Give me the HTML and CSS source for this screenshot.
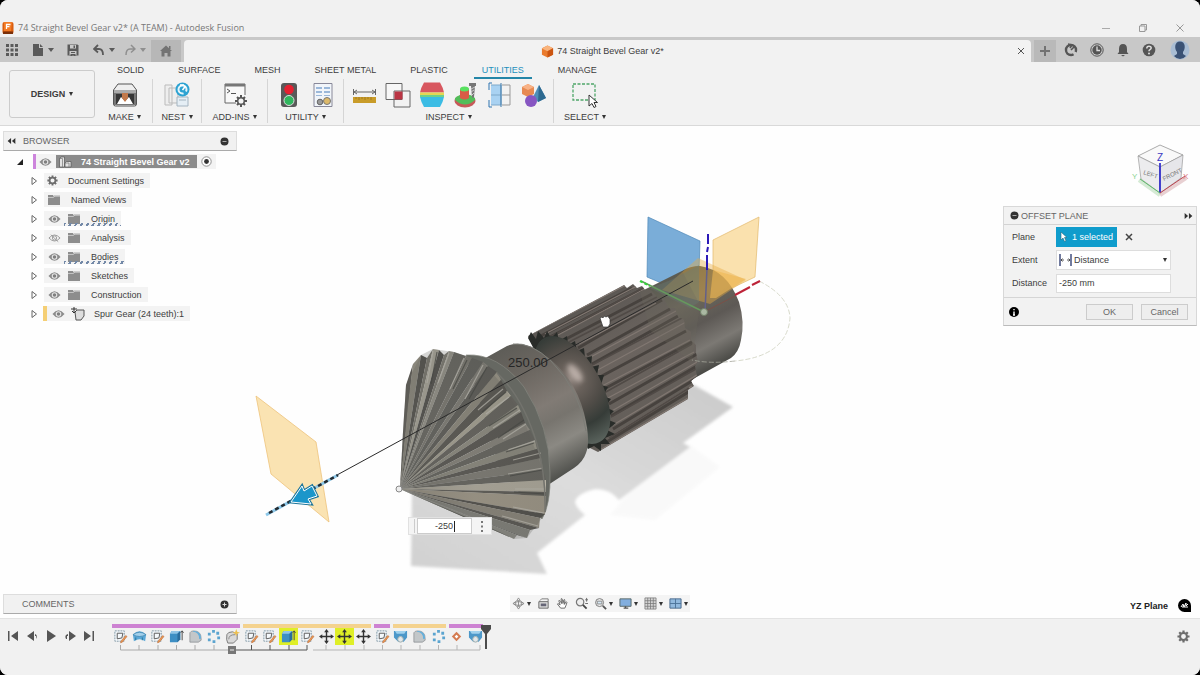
FILE: index.html
```html
<!DOCTYPE html>
<html lang="en">
<head>
<meta charset="utf-8">
<title>74 Straight Bevel Gear v2* (A TEAM) - Autodesk Fusion</title>
<link rel="stylesheet" href="styles.css">
</head>
<body>
<svg class="defs" width="0" height="0" aria-hidden="true">
  <symbol id="eye" viewBox="0 0 14 10"><path d="M.5 5Q7-3 13.500 5Q7 13 .5 5Z" fill="#8b8b8b"/><circle cx="7" cy="5" r="3" fill="#e8e8e8"/><circle cx="7" cy="5" r="1.900" fill="#808080"/></symbol>
  <symbol id="eye-off" viewBox="0 0 14 10"><path d="M1 5Q7-1.500 13 5Q7 11.500 1 5Z" fill="none" stroke="#999"/><circle cx="7" cy="5" r="2.300" fill="none" stroke="#999"/><path d="M3 1.500L11 9" stroke="#999"/></symbol>
  <symbol id="folder" viewBox="0 0 14 12"><path d="M1 1h5l1 2h6v8H1Z" fill="#8d8d8d"/><path d="M7 3V1.500h6V3" fill="#a5a5a5"/><path d="M1 3.500h5.500L8 2h5" stroke="#d0d0d0" fill="none" stroke-width=".8"/></symbol>
  <symbol id="gear" viewBox="0 0 14 14"><path d="M7 0.500V13.500M.5 7H13.500M2.400 2.400L11.600 11.600M11.600 2.400L2.400 11.600" stroke="#6d6d6d" stroke-width="2.400"/><circle cx="7" cy="7" r="3.700" fill="#f3f3f3" stroke="#6d6d6d" stroke-width="2.200"/></symbol>
  <symbol id="closed" viewBox="0 0 8 10"><path d="M2 1.500L6.500 5L2 8.500Z" fill="#fff" stroke="#666"/></symbol>
  <symbol id="sketch" viewBox="0 0 16 16"><path d="M2 2h10v11H2Z" fill="#f5f9fc" stroke="#7c93a3" stroke-dasharray="2 1"/><path d="M4.500 4.500h6l-1 5-5 1Z" fill="none" stroke="#555"/><path d="M13.500 7l1.500 1-5 6-2 .8.5-2Z" fill="#e79755" stroke="#b96532" stroke-width=".5"/></symbol>
  <symbol id="extrude" viewBox="0 0 16 16"><path d="M1 5l2-3h9v9l-3 3H1Z" fill="#3e8fc4"/><path d="M1 5l2-3h9L9 5Z" fill="#90c4e6"/><path d="M9 5l3-3v9l-3 3Z" fill="#2b6d9d"/><path d="M14 12V2M12.500 4L14 2l1.500 2" stroke="#444" fill="none"/></symbol>
  <symbol id="revolve" viewBox="0 0 16 16"><path d="M1 6Q8-1 15 6L14 13Q8 9 2 13Z" fill="#5ba8d7"/><path d="M1 6Q8 1 15 6Q8 10 1 6" fill="#a3d0eb" stroke="#367da8" stroke-width=".7"/><path d="M4 9v3M11 9v3" stroke="#287399"/></symbol>
  <symbol id="fillet" viewBox="0 0 16 16"><path d="M2 4q1-2 4-2 8 0 8 8v2l-3 2H2Z" fill="#c3c7c9" stroke="#808488" stroke-width=".7"/><path d="M5 3q7 0 7 8l2-1Q14 2 6 2Z" fill="#64b0dd"/></symbol>
  <symbol id="pattern" viewBox="0 0 16 16"><g fill="#5ba4cf"><path d="M6.500 1h3v3h-3zM11 3h3v3h-3zM12 8h3v3h-3zM7 12h3v3H7zM2 10h3v3H2zM2 4h3v3H2z"/></g></symbol>
  <symbol id="form" viewBox="0 0 16 16"><path d="M2 6q1-3 6-3l5 2v6l-4 4H3Q1 12 2 6Z" fill="#d9d9d9" stroke="#777"/><path d="M4 11q0-5 7-5" fill="none" stroke="#888"/><path d="M12 0l1 3 3 1-3 1-1 3-1-3-3-1 3-1Z" fill="#edc04f"/></symbol>
  <symbol id="move" viewBox="0 0 16 16"><path d="M8 2v12M2 8h12" stroke="#333" stroke-width="1.500"/><path d="M8 0l2.500 3.500h-5ZM8 16l2.500-3.500h-5ZM0 8l3.500-2.500v5ZM16 8l-3.500-2.500v5Z" fill="#333"/></symbol>
  <symbol id="cut" viewBox="0 0 16 16"><path d="M1 2h14v7l-4 5-1-5Q8 6 6 9v5L1 9Z" fill="#4d98c9"/><path d="M2 2h12l-2 3H4Z" fill="#a0d1ed"/><circle cx="8" cy="11" r="3" fill="#e3e8eb" stroke="#9aa"/></symbol>
  <symbol id="diamond" viewBox="0 0 16 16"><path d="M8 3l5 5-5 5-5-5Z" fill="#d47b51"/><path d="M8 6l2 2-2 2-2-2Z" fill="#fff"/></symbol>
  <symbol id="hex" viewBox="0 0 14 14"><path d="M7 .5l6 3v7l-6 3-6-3v-7Z" fill="#ea7b2d"/><path d="M7 .5l6 3-6 3.300-6-3Z" fill="#f9b47d"/><path d="M7 6.800l6-3.300v7l-6 3Z" fill="#cb5511"/></symbol>
</svg>

<div class="app">
  <header class="titlebar">
    <svg class="logo" viewBox="0 0 12 14"><rect x=".5" y="1" width="11" height="12" rx="2" fill="#d95d0f"/><path d="M2 1h8l-1 9H2Z" fill="#f37b25"/><path d="M4.500 8V3.500h4M4.500 5.700h3" stroke="#fff" stroke-width="1.300" fill="none"/><path d="M1 10.500h10V13H1Z" fill="#7a2f08"/></svg>
    <span class="title">74 Straight Bevel Gear v2* (A TEAM) - Autodesk Fusion</span>
    <div class="window-buttons">
      <button aria-label="Minimize"><svg viewBox="0 0 10 10"><path d="M1 5.500h8" stroke="#aaa"/></svg></button>
      <button aria-label="Restore"><svg viewBox="0 0 10 10"><path d="M1.500 3h5.500v5.500h-5.500zM3 3V1.500h5.500V7H7" fill="none" stroke="#999"/></svg></button>
      <button aria-label="Close"><svg viewBox="0 0 10 10"><path d="M1.500 1.500l7 7M8.500 1.500l-7 7" stroke="#999"/></svg></button>
    </div>
  </header>

  <nav class="tabbar">
    <div class="quick">
      <button class="q-grid" aria-label="Data panel"><svg width="12" height="12" viewBox="0 0 12 12"><path d="M0 0h3v3H0zM4.500 0h3v3h-3zM9 0h3v3H9zM0 4.500h3v3H0zM4.500 4.500h3v3h-3zM9 4.500h3v3H9zM0 9h3v3H0zM4.500 9h3v3h-3zM9 9h3v3H9z" fill="#5a5a5a"/></svg></button>
      <button class="q-file" aria-label="File"><svg width="12" height="14" viewBox="0 0 12 14"><path d="M1 1h6v4h4v8H1Z" fill="#5a5a5a"/><path d="M8 1l3 3H8Z" fill="#5a5a5a"/></svg><i class="caret big"></i></button>
      <button class="q-save" aria-label="Save"><svg width="12" height="12" viewBox="0 0 12 12"><path d="M.5.5h10l1 1v10H.5Z" fill="#5a5a5a"/><path d="M3 1h6v3.500H3zM2.500 7h7v4h-7z" fill="#c9c9c9"/><path d="M6.500 1.500H8V4H6.500zM4 8h4v1H4zM3.500 10h5v2h-2v-1h-1v1h-2z" fill="#5a5a5a"/></svg></button>
      <button class="q-undo" aria-label="Undo"><svg width="12" height="12" viewBox="0 0 12 12"><path d="M5 1L1 5l4 3.500M1.500 5H6q4 0 4 6" fill="none" stroke="#5a5a5a" stroke-width="1.800"/></svg><i class="caret big"></i></button>
      <button class="q-redo" aria-label="Redo"><svg width="12" height="12" viewBox="0 0 12 12"><path d="M7 1l4 4-4 3.500M10.500 5H6q-4 0-4 6" fill="none" stroke="#8f8f8f" stroke-width="1.500"/></svg><i class="caret big dim"></i></button>
      <button class="home" aria-label="Home"><svg width="12" height="12" viewBox="0 0 12 12"><path d="M6 .5L12 6h-1.500v5.500h-3V8h-3v3.500h-3V6H0ZM9 1h1.500v3H9Z" fill="#737373"/></svg></button>
    </div>
    <div class="doc-tab">
      <span class="doc-name"><svg width="13" height="13"><use href="#hex"/></svg>74 Straight Bevel Gear v2*</span>
      <button class="doc-close" aria-label="Close tab"><svg width="8" height="8" viewBox="0 0 8 8"><path d="M1 1l6 6M7 1L1 7" stroke="#555"/></svg></button>
    </div>
    <div class="account">
      <button class="plus" aria-label="New tab"><svg width="12" height="12" viewBox="0 0 12 12"><path d="M6 1v10M1 6h10" stroke="#727272" stroke-width="2"/></svg></button>
      <button aria-label="Extensions"><svg width="14" height="14" viewBox="0 0 14 14"><circle cx="7" cy="7" r="5" fill="none" stroke="#555" stroke-width="2.400" stroke-dasharray="2 3 40"/><path d="M7 7l3-3M4 1l4 1-2 3" stroke="#555" fill="none" stroke-width="1.600"/></svg></button>
      <button aria-label="Job status"><svg width="14" height="14" viewBox="0 0 14 14"><circle cx="7" cy="7" r="6.200" fill="#ccc" stroke="#555"/><circle cx="7" cy="7" r="4.700" fill="#555"/><path d="M7 3.500V7.500h3" stroke="#ddd" fill="none" stroke-width="1.300"/></svg></button>
      <button aria-label="Notifications"><svg width="14" height="14" viewBox="0 0 14 14"><path d="M7 1q4 0 4 5v3l1.500 2h-11L3 9V6q0-5 4-5ZM5 12h4l-2 1.500Z" fill="#555"/></svg></button>
      <button aria-label="Help"><svg width="14" height="14" viewBox="0 0 14 14"><circle cx="7" cy="7" r="6.300" fill="#555"/><path d="M4.800 5.500q0-2.200 2.200-2.200t2.200 1.800q0 1-1.500 1.800-.7.500-.7 1.300" stroke="#ddd" fill="none" stroke-width="1.500"/><circle cx="7" cy="10.500" r="1" fill="#ddd"/></svg></button>
      <button aria-label="Account"><svg width="20" height="20" viewBox="0 0 20 20"><circle cx="10" cy="10" r="9.500" fill="#a9bdd4"/><path d="M10 1.500c6 0 5.500 8 3 10.500v2l3 2q-2.500 3-6 3t-6-3l3-2v-2C4.500 9.500 4 1.500 10 1.500Z" fill="#3b5275"/></svg></button>
    </div>
  </nav>

  <section class="ribbon">
    <button class="design">DESIGN <i class="caret"></i></button>
    <div class="ribbon-main">
      <div class="ribbon-tabs" role="tablist">
        <button role="tab">SOLID</button><button role="tab">SURFACE</button><button role="tab">MESH</button><button role="tab">SHEET METAL</button><button role="tab">PLASTIC</button><button role="tab" class="active" aria-selected="true">UTILITIES</button><button role="tab">MANAGE</button>
      </div>
      <div class="groups">
        <div class="group g-make"><div class="tools"><button aria-label="3D Print"><svg viewBox="0 0 26 26"><path d="M1.500 8L6 2h14l4.500 6v14q0 2-2 2h-19q-2 0-2-2Z" fill="#eee" stroke="#555"/><path d="M2 8h22v15H2Z" fill="#777"/><path d="M2 8h22v3H2Z" fill="#aaa"/><path d="M4 12h18v10H4Z" fill="#363636"/><path d="M5 22l4-7 4 4 4-4 4 7Z" fill="#fff"/><path d="M10 11h6v5l-3 4-3-4Z" fill="#c2794b"/></svg></button></div><button class="label">MAKE <i class="caret"></i></button></div>
        <div class="group g-nest"><div class="tools"><button aria-label="Nest"><svg viewBox="0 0 26 26"><path d="M1 3h7v20H1zM5 6h9v15H5z" fill="#eee" stroke="#bbb"/><path d="M13 15h11v9H13zM15 18h7" fill="#e5eef5" stroke="#a4b4c0"/><circle cx="18.500" cy="7.500" r="7" fill="#2ba2d2"/><circle cx="18.500" cy="7.500" r="4" fill="none" stroke="#e5f5fb" stroke-width="2" stroke-dasharray="2 3 30"/><path d="M18.500 8l3-4M16 3l4 0" stroke="#fff" stroke-width="1.500"/></svg></button></div><button class="label">NEST <i class="caret"></i></button></div>
        <div class="group g-addins"><div class="tools"><button aria-label="Scripts and Add-Ins"><svg viewBox="0 0 26 26"><path d="M14 21H3V2h20v11" fill="#f8f8f8" stroke="#666"/><path d="M3 2h20v2.500H3Z" fill="#777"/><path d="M5 7l3 2-3 2M9 11.500h5" fill="none" stroke="#555"/><path d="M19 13v12M13 19h12M15 15l8 8M23 15l-8 8" stroke="#555" stroke-width="2"/><circle cx="19" cy="19" r="3.300" fill="#f4f4f4" stroke="#555" stroke-width="1.500"/></svg></button></div><button class="label">ADD-INS <i class="caret"></i></button></div>
        <div class="group g-utility"><div class="tools"><button aria-label="Compute"><svg viewBox="0 0 26 26"><rect x="5" y="1" width="16" height="24" rx="3" fill="#595959"/><circle cx="13" cy="7.500" r="4.800" fill="#e62031"/><circle cx="13" cy="18.500" r="5" fill="#31b65e" stroke="#ddd"/></svg></button><button aria-label="Utility report"><svg viewBox="0 0 26 26"><path d="M4 1.500h18v23H4Z" fill="#f1f5fa" stroke="#889"/><path d="M6 5h6v2H6zM14 5h6v2h-6zM6 9h6v2H6zM14 9h6v2h-6zM6 13h6v1H6zM14 13h6v1h-6z" fill="#9bb8da"/><circle cx="10" cy="20" r="2.800" fill="#999" stroke="#666"/><circle cx="17" cy="19" r="3.500" fill="#ddb969" stroke="#777"/></svg></button></div><button class="label">UTILITY <i class="caret"></i></button></div>
        <div class="group g-inspect"><div class="tools">
          <button aria-label="Measure"><svg viewBox="0 0 26 26"><path d="M2 15h23v6H2Z" fill="#c99c29"/><path d="M5 15v2M8 15v3M11 15v2M14 15v3M17 15v2M20 15v3" stroke="#a27b20"/><path d="M2.500 7v6M24.500 7v6M3 10h21M6 8l-3 2 3 2M21 8l3 2-3 2" fill="none" stroke="#666"/></svg></button>
          <button aria-label="Interference"><svg viewBox="0 0 26 26"><path d="M1 1.500h16v16H1z" fill="#f7f7f7" stroke="#666"/><path d="M9 9h16v16H9z" fill="none" stroke="#666"/><path d="M9.500 9.500h8v8h-8Z" fill="#ba3544"/></svg></button>
          <button aria-label="Curvature"><svg viewBox="0 0 26 26"><path d="M5 .5h16q3 5 4 10H1Q2 5.500 5 .5Z" fill="#d8575f"/><path d="M1 10.500h24v2.500H1Z" fill="#e5d753"/><path d="M1 13h24v2H1Z" fill="#6fd188"/><path d="M1 15h24q-1 5-4 10H5Q2 20 1 15Z" fill="#3bbce4"/></svg></button>
          <button aria-label="Accessibility"><svg viewBox="0 0 26 26"><ellipse cx="12" cy="19" rx="10.500" ry="6.500" fill="#c75959"/><path d="M2 16q10-8 20 0v2Q12 27 2 18Z" fill="#52bd59"/><path d="M7 7h9v9q-4.500 3-9 0Z" fill="#d95b46"/><ellipse cx="11.500" cy="7" rx="4.500" ry="2.500" fill="#58e160"/><path d="M16 1h7v3h-1l-1 11q-1 2-2 0L18 4h-2Z" fill="#777"/><path d="M18 7l4-2M18 10l3-2M19 13l2-2" stroke="#ccc"/></svg></button>
          <button aria-label="Section analysis"><svg viewBox="0 0 26 26"><path d="M4 3h10v20H4Z" fill="#a9d2f2"/><path d="M4 3h10v20H4M4 13h10" fill="none" stroke="#7fa9ca"/><path d="M15 3h8v20h-8M15 13h8" fill="none" stroke="#999"/><path d="M14 1v24" stroke="#3c79aa"/><path d="M2 8V1h3M2 18v7h3" fill="none" stroke="#2e75b1"/></svg></button>
          <button aria-label="Component colors"><svg viewBox="0 0 26 26"><path d="M7 2l6 3v7l-6 3-6-3V5Z" fill="#e78a52"/><path d="M7 2l6 3-6 3-6-3Z" fill="#f8b286"/><path d="M18 3l7 13-8 4-5-5Z" fill="#4e8fb9"/><path d="M18 3l7 13-8 4Z" fill="#2d6990"/><circle cx="10" cy="19" r="6" fill="#8756c2"/></svg></button>
        </div><button class="label">INSPECT <i class="caret"></i></button></div>
        <div class="group g-select"><div class="tools"><button aria-label="Select"><svg viewBox="0 0 26 26"><path d="M1 2h22v16H1Z" fill="none" stroke="#4fa669" stroke-width="1.300" stroke-dasharray="3 1.500"/><path d="M17 13v11l3-2.500 2 4 2-1-2-4h3.500Z" fill="#fff" stroke="#333"/></svg></button></div><button class="label">SELECT <i class="caret"></i></button></div>
      </div>
    </div>
  </section>

  <main class="stage">
    <svg class="scene" viewBox="0 126 1200 492" role="img" aria-label="Bevel gear model">
      <defs>
        <linearGradient id="collar" gradientUnits="userSpaceOnUse" x1="500" y1="347" x2="569" y2="474"><stop offset="0" stop-color="#5d5c57"/><stop offset=".25" stop-color="#6c6761"/><stop offset=".5" stop-color="#817b75"/><stop offset=".62" stop-color="#77746e"/><stop offset=".78" stop-color="#8b8983"/><stop offset="1" stop-color="#4d4e4a"/></linearGradient>
        <linearGradient id="shaft" gradientUnits="userSpaceOnUse" x1="670" y1="276" x2="718" y2="366"><stop offset="0" stop-color="#55564d"/><stop offset=".3" stop-color="#6b675b"/><stop offset=".55" stop-color="#5d5955"/><stop offset=".78" stop-color="#7c7974"/><stop offset="1" stop-color="#484844"/></linearGradient>
        <linearGradient id="spur" gradientUnits="userSpaceOnUse" x1="580" y1="307" x2="650" y2="425"><stop offset="0" stop-color="#5b5753"/><stop offset=".45" stop-color="#6b645f"/><stop offset="1" stop-color="#625d58"/></linearGradient>
        <radialGradient id="ball" gradientUnits="userSpaceOnUse" cx="575" cy="380" r="68"><stop offset="0" stop-color="#8d827c"/><stop offset=".2" stop-color="#69615b"/><stop offset=".45" stop-color="#514d48"/><stop offset=".7" stop-color="#363c38"/><stop offset="1" stop-color="#59625c"/></radialGradient>
        <linearGradient id="ground" x1="0" y1="1" x2="1" y2="0"><stop offset="0" stop-color="#d1d1d1"/><stop offset=".5" stop-color="#dcdcdc"/><stop offset="1" stop-color="#cacaca"/></linearGradient>
        <radialGradient id="shade" gradientUnits="userSpaceOnUse" cx="400" cy="489" r="150"><stop offset="0" stop-color="#62625c" stop-opacity=".45"/><stop offset=".5" stop-color="#6a6963" stop-opacity=".25"/><stop offset="1" stop-color="#5a5a54" stop-opacity=".25"/></radialGradient>
        <filter id="soft" x="-10%" y="-10%" width="120%" height="120%"><feGaussianBlur stdDeviation="1.500"/></filter>
        <filter id="glow" x="-50%" y="-50%" width="200%" height="200%"><feGaussianBlur stdDeviation="2.500"/></filter>
        <clipPath id="spur-body"><path d="M528 336L624 285L627 288L633 284L637 288L642 286L645 290L651 290L658 298L664 299L669 308L675 308L678 316L684 320L685 328L691 332V340L696 345V353L698 362L695 366L697 376L691 381L694 386L688 390L688 399L598 452L588 447Z"/></clipPath>
      </defs>

      <g filter="url(#soft)">
        <path d="M690 445L720 467L655 520L610 515L640 480Z" fill="#f9f9f9"/>
        <path d="M412 490L694 385L733 407L683 443L690 447L619 500Q610 489 596 489Q577 493 575 502Q576 508 585 515L537 553L547 574L411 566Z" fill="url(#ground)"/>
      </g>

      <path d="M648 217L700 241L699 272L671 287L647 277Z" fill="#7aadd8" stroke="#4e88b7" stroke-width=".7"/>
      <path d="M759 217L755 277L713 297V240Z" fill="#fae1ae" stroke="#e2b96b" stroke-width=".7"/>
      <path d="M759 281Q789 296 790 318Q787 356 735 361" fill="none" stroke="#d8dacb" stroke-dasharray="5 2"/>

      <path d="M640 292L682 271Q690 266 700 266Q727 270 739 302Q745 322 741 340Q739 352 731 358L684 384Z" fill="url(#shaft)"/>
      <path d="M698 258L746 280L710 304L662 290Z" fill="#e7ac42" opacity=".42"/>
      <path d="M713 270L746 279L716 298L710 298Z" fill="#eeb753" opacity=".6"/>
      <path d="M671 280L699 265V302L690 308L650 288Z" fill="#65807b" opacity=".4"/>

      <path d="M528 336L624 285L627 288L633 284L637 288L642 286L645 290L651 290L658 298L664 299L669 308L675 308L678 316L684 320L685 328L691 332V340L696 345V353L698 362L695 366L697 376L691 381L694 386L688 390L688 399L598 452L588 447Z" fill="url(#spur)"/>
      <g clip-path="url(#spur-body)">
        <path d="M537 338L632 288M548 338L641 290M564 340L652 294M578 348L662 300M587 355L670 309M592 364L678 316M600 377L686 331M604 389L692 342M609 404L697 354M611 416L697 366M613 429L697 378M605 443L690 391" stroke="#47423e" stroke-width="3"/>
        <path d="M533 333L626 285M545 334L637 286M558 335L648 287M579 344L656 303M587 359L676 311M594 372L686 322M602 386L690 340M606 399L694 352M610 412L697 362M613 425L697 375M610 437L692 386M600 450L688 398" stroke="#807771" stroke-width="1.400"/>
        <path d="M541 342L647 286M569 342L657 297M592 365L682 318M604 393L692 344M611 417L696 369M609 438L689 388" stroke="#504a46" stroke-width="1.500"/>
      </g>
      <path d="M640 292L682 271L700 305L692 362L650 330Z" fill="#6a695c" opacity=".28"/>
      <path d="M528 338L531 332L536 339L538 331L544 338L547 331L551 338L557 332L559 341L567 336L568 345L575 341L577 351L584 348L585 358L592 356L591 367L599 365L597 375L604 375L601 385L608 387L603 396L611 399L605 407L614 411L606 419L616 423L607 430L615 434L605 438L610 444L601 444L601 451L594 446L588 449Z" fill="#292c29"/>
      <ellipse cx="572" cy="390" rx="30" ry="59" transform="rotate(-28 572 390)" fill="url(#ball)"/>
      <ellipse cx="575" cy="373" rx="5" ry="11" transform="rotate(-38 575 373)" fill="#e5d7d0" opacity=".6" filter="url(#glow)"/>

      <path d="M480 361L507 346Q523 339 543 354Q574 375 584 413Q591 441 586 453Q583 462 574 468L548 485Q548 431 480 361Z" fill="url(#collar)"/>
      <path d="M513 344Q531 342 551 361Q580 390 586 431" fill="none" stroke="#7c7d77"/>
      <path d="M466 355Q498 353 524 387Q550 427 550 473Q551 504 542 519L500 470Z" fill="#666862" stroke="#85867f" stroke-width=".7"/>

      <g class="cone">
        <path d="M400 489L403 432L406 385L413 364Z" fill="#5b5954"/><path d="M400 489L408 405L413 364L421 355Z" fill="#8a877c"/><path d="M400 489L421 355L427 358Z" fill="#4f4e4a"/><path d="M400 489L427 358L433 349Z" fill="#77756d"/><path d="M400 489L433 349L439 350Z" fill="#aaa79b"/><path d="M400 489L439 350L444 355Z" fill="#4d4c49"/><path d="M400 489L444 355L449 351Z" fill="#7c7a72"/><path d="M400 489L449 351L454 352Z" fill="#96948b"/><path d="M400 489L454 352L466 356Z" fill="#65645f"/><path d="M400 489L466 356L472 358Z" fill="#7a7871"/><path d="M400 489L472 358L483 362Z" fill="#5f5f5b"/><path d="M400 489L483 362L488 366Z" fill="#7f7d76"/><path d="M400 489L488 366L497 372Z" fill="#5a5955"/><path d="M400 489L497 372L501 380Z" fill="#8d897d"/><path d="M400 489L501 380L507 391Z" fill="#55534e"/><path d="M400 489L507 391L511 396Z" fill="#aaa697"/><path d="M400 489L511 396L518 405Z" fill="#62605b"/><path d="M400 489L518 405L521 412Z" fill="#8f8d82"/><path d="M400 489L521 412L525 423Z" fill="#54524e"/><path d="M400 489L525 423L530 430Z" fill="#86837b"/><path d="M400 489L530 430L535 440Z" fill="#62615c"/><path d="M400 489L535 440L537 449Z" fill="#8d8b80"/><path d="M400 489L537 449L541 458Z" fill="#55534f"/><path d="M400 489L541 458L543 470Z" fill="#7d7b74"/><path d="M400 489L543 470L546 480Z" fill="#63625d"/><path d="M400 489L546 480L546 492Z" fill="#b5b0a2"/><path d="M400 489L546 492L546 496Z" fill="#5a5853"/><path d="M400 489L546 496L545 514Z" fill="#a39b8b"/><path d="M400 489L545 514L540 518Z" fill="#4c4a46"/><path d="M400 489L540 518L539 528Z" fill="#8b867b"/><path d="M400 489L539 528L530 530Z" fill="#55534f"/><path d="M400 489L530 530L527 538Z" fill="#80807a"/><path d="M400 489L527 538L517 535Z" fill="#4e4e4a"/><path d="M400 489L517 535L514 539Z" fill="#8a8a84"/><path d="M400 489L514 539L480 523Z" fill="#4f504b"/>
        <path d="M400 489L403 432L406 385L421 355L433 349L454 352L483 362L505 388L525 423L543 470L546 492L545 514L527 538L514 539Z" fill="url(#shade)"/>
        <path d="M427 383L433 351M438 383L449 353M450 389L464 358M465 399L483 365M478 410L503 389M486 414L509 397M493 428L520 410M503 439L526 424M508 450L535 441M513 460L541 453M508 474L543 468M515 489L545 489M513 507L544 513M502 516L538 526" stroke="#aeaca4" stroke-width="1.200" opacity=".75"/>
        <path d="M431 384L437 352M453 389L467 360M469 399L487 367M482 412L506 392M489 426L517 408M498 438L524 420M506 452L534 443M510 476L542 470M514 492L545 494" stroke="#464743" stroke-width="1.200" opacity=".75"/>
        <path d="M497 373Q523 397 537 444Q546 475 545 512" fill="none" stroke="#73736d" stroke-width="1.500"/>
      </g>

      <path d="M256 396L316 442L329 522L271 474Z" fill="#fae2ae" fill-opacity=".95" stroke="#edc37b" stroke-width=".8"/>
      <path d="M337 475L693 281" stroke="#2a2a2a" stroke-width="1"/>
      <path d="M266 515L338 475" stroke="#8dc8e9" stroke-width="3"/>
      <path d="M269 513L338 475" stroke="#242b31" stroke-width="2.500" stroke-dasharray="4 3"/>
      <path d="M291 502L302 486L304 491L312 486L317 496L308 499L311 504Z" fill="#238cba" stroke="#1c759b" stroke-width="3"/>
      <path d="M291 502L302 486L304 491L312 486L317 496L308 499L311 504Z" fill="#1b96ca" stroke="#fff"/>
      <circle cx="399" cy="489" r="3" fill="#eee" stroke="#888"/>
      <path d="M641 281L704 312" stroke="#66985d" stroke-width="1.500"/><path d="M640 281L650 286" stroke="#32d43b" stroke-width="2" stroke-dasharray="3 2"/>
      <path d="M704 312L735 296" stroke="#7b5047"/><path d="M735 295L750 287M752 285L760 281" stroke="#bd2338" stroke-width="2"/>
      <path d="M705 312L707 268" stroke="#63608a" stroke-width="1.500"/><path d="M707 270L707 255M707 252L708 247M708 244L708 234" stroke="#2b19b8" stroke-width="2"/>
      <circle cx="704" cy="312" r="3.500" fill="#aab8a2" stroke="#718068"/>
      <path d="M735 361Q710 364 692 360" fill="none" stroke="#a4a69b" stroke-width=".8" stroke-dasharray="5 2"/>
      <text class="dimension" x="508" y="367">250.00</text>
      <path d="M601 321l-1-3 2-1 1 1 1-2 2 1 2-1 1 2 1 1v5l-2 3h-5Z" fill="#fff" stroke="#333" stroke-width=".7"/>

      <g class="view-cube">
        <path d="M1139 180L1160 195" fill="none" stroke="#b9dcb9" stroke-width="4" opacity=".6"/><path d="M1160 195L1186 178" fill="none" stroke="#d9b0b4" stroke-width="4" opacity=".6"/>
        <path d="M1160 145L1183 155L1160 167L1138 156Z" fill="#f9f9f9" stroke="#888" stroke-width=".7"/>
        <path d="M1138 156L1160 167V193L1141 179Z" fill="#ececee" stroke="#999" stroke-width=".7"/>
        <path d="M1183 155L1160 167V193L1181 178Z" fill="#e6e6ea" stroke="#999" stroke-width=".7"/>
        <path d="M1160 193V163" stroke="#2c27cd" stroke-width="1.700"/><path d="M1160 193L1140 179" stroke="#60bc6b"/><path d="M1160 193L1185 176" stroke="#bc4450"/>
        <text class="axis-z" x="1157" y="161">Z</text><text class="axis-y" x="1132" y="179">Y</text><text class="axis-x" x="1183" y="179">X</text>
        <text class="face" transform="translate(1143 174) rotate(18)">LEFT</text><text class="face" transform="translate(1164 181) rotate(-27)">FRONT</text>
      </g>
    </svg>

    <aside class="browser">
      <div class="panel-head"><svg width="9" height="6" viewBox="0 0 9 7"><path d="M4 0v7L0 3.500ZM9 0v7L5 3.500Z" fill="#333"/></svg><span>BROWSER</span><button class="dot" aria-label="Collapse"><svg width="9" height="9" viewBox="0 0 9 9"><circle cx="4.500" cy="4.500" r="4" fill="#333"/><path d="M2.500 4.500h4" stroke="#aaa"/></svg></button></div>
      <ul class="tree">
        <li class="root"><svg class="open" width="8" height="8" viewBox="0 0 8 8"><path d="M7 1v6H1Z" fill="#222"/></svg><span class="row purple"><svg class="eye"><use href="#eye"/></svg><strong><svg width="14" height="12" viewBox="0 0 14 12"><path d="M1.500 2.500l2-1.500h3v10h-5zM7 7l1.500-1.500H13v5.500H7z" fill="#e2e2e2" stroke="#555" stroke-width=".7"/><path d="M1.500 2.500h3V11M7 7h4v4" fill="none" stroke="#777" stroke-width=".7"/></svg>74 Straight Bevel Gear v2</strong><svg width="11" height="11" viewBox="0 0 11 11"><circle cx="5.500" cy="5.500" r="4.700" fill="#fff" stroke="#777" stroke-width=".8"/><circle cx="5.500" cy="5.500" r="2.400" fill="#333"/></svg></span></li>
        <li><svg class="closed"><use href="#closed"/></svg><span class="row settings"><svg width="11" height="11"><use href="#gear"/></svg>Document Settings</span></li>
        <li><svg class="closed"><use href="#closed"/></svg><span class="row views"><svg class="folder"><use href="#folder"/></svg>Named Views</span></li>
        <li><svg class="closed"><use href="#closed"/></svg><span class="row"><svg class="eye"><use href="#eye"/></svg><span class="item hatched"><svg class="folder"><use href="#folder"/></svg>Origin</span></span></li>
        <li><svg class="closed"><use href="#closed"/></svg><span class="row"><svg class="eye"><use href="#eye-off"/></svg><span class="item"><svg class="folder"><use href="#folder"/></svg>Analysis</span></span></li>
        <li><svg class="closed"><use href="#closed"/></svg><span class="row"><svg class="eye"><use href="#eye"/></svg><span class="item hatched"><svg class="folder"><use href="#folder"/></svg>Bodies</span></span></li>
        <li><svg class="closed"><use href="#closed"/></svg><span class="row"><svg class="eye"><use href="#eye"/></svg><span class="item"><svg class="folder"><use href="#folder"/></svg>Sketches</span></span></li>
        <li><svg class="closed"><use href="#closed"/></svg><span class="row"><svg class="eye"><use href="#eye"/></svg><span class="item"><svg class="folder"><use href="#folder"/></svg>Construction</span></span></li>
        <li><svg class="closed"><use href="#closed"/></svg><span class="row yellow"><svg class="eye"><use href="#eye"/></svg><span class="item spur"><svg width="14" height="14" viewBox="0 0 14 14"><path d="M4 5l2-2h7v6l-3 4H5Z" fill="#ddd" stroke="#555"/><path d="M3 0v6M1 4l2 2 2-2M0 2h6" stroke="#333" fill="none"/></svg>Spur Gear (24 teeth):1</span></span></li>
      </ul>
    </aside>

    <form class="offset">
      <div class="offset-head"><svg width="9" height="9" viewBox="0 0 9 9"><circle cx="4.500" cy="4.500" r="4" fill="#333"/><path d="M2.500 4.500h4" stroke="#aaa"/></svg><span>OFFSET PLANE</span><svg width="9" height="6" viewBox="0 0 9 7"><path d="M0 0v7l4-3.500ZM5 0v7l4-3.500Z" fill="#333"/></svg></div>
      <div class="fields">
        <label for="plane">Plane</label>
        <div class="plane"><button id="plane" type="button"><svg width="8" height="10" viewBox="0 0 8 10"><path d="M1 0v8l2-2 1.500 3.500 1.500-.7-1.500-3.300H7Z" fill="#fff" stroke="#256980" stroke-width=".6"/></svg>1 selected</button><button class="clear" type="button" aria-label="Clear"><svg width="8" height="8" viewBox="0 0 8 8"><path d="M1 1l6 6M7 1L1 7" stroke="#444" stroke-width="1.500"/></svg></button></div>
        <label for="extent">Extent</label>
        <div class="select"><svg width="13" height="14" viewBox="0 0 13 14"><path d="M1 1v12M12 1v12" stroke="#25346b" stroke-width="1.300"/><path d="M2 7h3M8 7h3M3.500 5.500L2 7l1.500 1.500M9.500 5.500L11 7l-1.500 1.500" stroke="#333" stroke-width=".8" fill="none"/></svg><select id="extent"><option>Distance</option></select><i class="caret"></i></div>
        <label for="distance">Distance</label>
        <input id="distance" value="-250 mm">
      </div>
      <div class="offset-foot"><svg width="10" height="10" viewBox="0 0 10 10"><circle cx="5" cy="5" r="5" fill="#000"/><path d="M5 4.500V8M4 8h2M5 2v1.300" stroke="#fff" stroke-width="1.400"/></svg><button type="button">OK</button><button type="button">Cancel</button></div>
    </form>

    <div class="float-input"><i class="grip"></i><input aria-label="Offset distance" value="-250"><i class="text-cursor"></i><button aria-label="More"><svg width="4" height="11" viewBox="0 0 4 11"><path d="M1 0h2v2H1zM1 4.500h2v2H1zM1 9h2v2H1z" fill="#777"/></svg></button></div>

    <div class="comments panel-head"><span>COMMENTS</span><button class="dot" aria-label="Add comment"><svg width="9" height="9" viewBox="0 0 9 9"><circle cx="4.500" cy="4.500" r="4" fill="#333"/><path d="M2.500 4.500h4M4.500 2.500v4" stroke="#ddd"/></svg></button></div>

    <div class="navbar">
      <button aria-label="Orbit"><svg viewBox="0 0 14 14"><path d="M1 7l3-2v4ZM13 7l-3-2v4ZM7 1L5 4h4ZM7 13l-2-3h4Z" fill="#eee" stroke="#777" stroke-width=".8"/><ellipse cx="7" cy="7" rx="5" ry="2" fill="none" stroke="#888"/><path d="M7 4v6" stroke="#888"/></svg><i class="caret"></i></button>
      <button aria-label="Look at"><svg viewBox="0 0 14 14"><path d="M2 5h10v7H2Z" fill="#ddd" stroke="#666"/><path d="M4 7h6v3H4z" fill="#667"/><path d="M3 4l2-2h7v3" fill="none" stroke="#777"/></svg></button>
      <button aria-label="Pan"><svg viewBox="0 0 14 14"><path d="M5 12L1.500 7.500q1-1 3 1L3 4q1-1 2 1l1 2-.5-5q1-1 1.500 1l.5 4 1-4q1-1 1 1L9 8l2-3q1.500 0 0 3.500L9.500 12Z" fill="#fff" stroke="#666"/></svg></button>
      <button aria-label="Zoom"><svg viewBox="0 0 14 14"><circle cx="5.500" cy="5.500" r="4" fill="#eee" stroke="#777" stroke-width="1.300"/><path d="M8.500 8.500l4 4" stroke="#444" stroke-width="2"/><path d="M11 3h3M12.500 1v4M11 7h3" stroke="#666"/></svg></button>
      <button aria-label="Zoom window"><svg viewBox="0 0 14 14"><circle cx="6" cy="6" r="4.300" fill="#eee" stroke="#777"/><path d="M3.500 4.500h5v3h-5z" fill="#d7e9f5" stroke="#888"/><path d="M9.500 9.500l3.500 3.500" stroke="#555" stroke-width="2"/></svg><i class="caret"></i></button>
      <button aria-label="Display"><svg viewBox="0 0 14 14"><path d="M1 2h12v8H1Z" fill="#82aede" stroke="#566"/><path d="M5 12h5M7 10v2" stroke="#555" stroke-width="1.500"/></svg><i class="caret"></i></button>
      <button aria-label="Grid"><svg viewBox="0 0 14 14"><path d="M1 1h12v12H1Z" fill="#d5d5d5"/><path d="M1 1h12v12H1ZM4 1v12M7 1v12M10 1v12M1 4h12M1 7h12M1 10h12" fill="none" stroke="#777" stroke-width=".8"/></svg><i class="caret"></i></button>
      <button aria-label="Viewports"><svg viewBox="0 0 14 14"><path d="M1 2h12v10H1Z" fill="#91b9de" stroke="#456789"/><path d="M7 2v10M1 7h12" stroke="#4c7298"/></svg><i class="caret"></i></button>
    </div>
    <div class="status">YZ Plane<svg width="13" height="13" viewBox="0 0 13 13"><path d="M6.500 0A6.500 6.500 0 0 1 13 6.500V13H6.500A6.500 6.500 0 0 1 6.500 0Z"/><path d="M3 8l2-3 1 3 2-4v3l2-2M4 8h6" stroke="#fff" fill="none"/></svg></div>
  </main>

  <footer class="timeline">
    <div class="playback">
      <button aria-label="Start"><svg viewBox="0 0 12 12"><path d="M1 1h1.500v10H1zM11 1v10L4 6Z" fill="#555"/></svg></button>
      <button aria-label="Back"><svg viewBox="0 0 12 12"><path d="M8 1v10L1 6ZM9 4q3 1 1 5V6H9Z" fill="#555"/></svg></button>
      <button aria-label="Play"><svg viewBox="0 0 12 12"><path d="M2 0v12l9-6Z" fill="#555"/></svg></button>
      <button aria-label="Forward"><svg viewBox="0 0 12 12"><path d="M5 1v10l7-5ZM4 4Q0 5 2 9h1V6h1Z" fill="#555"/></svg></button>
      <button aria-label="End"><svg viewBox="0 0 12 12"><path d="M1 1v10l7-5ZM9.500 1H11v10H9.500z" fill="#555"/></svg></button>
    </div>
    <div class="history">
      <i class="bar p s7"></i><i class="bar y s7"></i><i class="bar p s1"></i><i class="bar y s3"></i><i class="bar p s2"></i>
      <button aria-label="Sketch"><svg><use href="#sketch"/></svg></button><button aria-label="Revolve"><svg><use href="#revolve"/></svg></button><button aria-label="Sketch"><svg><use href="#sketch"/></svg></button><button aria-label="Extrude"><svg><use href="#extrude"/></svg></button><button aria-label="Fillet"><svg><use href="#fillet"/></svg></button><button aria-label="Pattern"><svg><use href="#pattern"/></svg></button><button aria-label="Component" class="folded"><svg><use href="#form"/></svg></button><button aria-label="Sketch"><svg><use href="#sketch"/></svg></button><button aria-label="Sketch"><svg><use href="#sketch"/></svg></button><button aria-label="Extrude" class="lit"><svg><use href="#extrude"/></svg></button><button aria-label="Sketch"><svg><use href="#sketch"/></svg></button><button aria-label="Move"><svg><use href="#move"/></svg></button><button aria-label="Move" class="lit"><svg><use href="#move"/></svg></button><button aria-label="Move"><svg><use href="#move"/></svg></button><button aria-label="Sketch"><svg><use href="#sketch"/></svg></button><button aria-label="Cut"><svg><use href="#cut"/></svg></button><button aria-label="Fillet"><svg><use href="#fillet"/></svg></button><button aria-label="Pattern"><svg><use href="#pattern"/></svg></button><button aria-label="Joint origin"><svg><use href="#diamond"/></svg></button><button aria-label="Cut"><svg><use href="#cut"/></svg></button>
      <svg class="rail" viewBox="0 0 374 9"><path d="M9.500 0v5M28 0v5M47 0v5M65.500 0v5M84 0v5M103 0v5M9.500 5H121" fill="none" stroke="#aaa"/><path d="M121 5H196V0M140.500 0v5M159 0v5M178 0v5" fill="none" stroke="#555"/><path d="M202 5H369V0M215 0v5M234 0v5M253 0v5M271.500 0v5M290 0v5M309 0v5M327.500 0v5M346 0v5" fill="none" stroke="#b5b5b5"/><path d="M117 1h8v8h-8Z" fill="#777"/><path d="M119 5h4" stroke="#eee"/></svg>
    </div>
    <svg class="playhead" width="10" height="26" viewBox="0 0 10 26"><path d="M0 1h10v4L6 10v15H4V10L0 5Z" fill="#4b4b4b"/></svg>
    <button class="settings-button" aria-label="Timeline settings"><svg width="13" height="13"><use href="#gear"/></svg></button>
  </footer>
</div>
</body>
</html>
```
FILE: styles.css
```css
* { box-sizing: border-box; }
html, body { height: 100%; }
body { margin: 0; background: #000; color: #3d3d3d; font: 9px/12px "Liberation Sans", Arial, sans-serif; }
button, input, select { font: inherit; color: inherit; }
button { display: flex; align-items: center; justify-content: center; padding: 0; border: 0; background: none; }
svg { display: block; flex: none; }
.defs { position: absolute; }
.app { display: flex; flex-direction: column; min-height: 100vh; border-radius: 8px; overflow: hidden; background: #f1f1f1; }
.caret { display: inline-block; flex: none; border: 2px solid transparent; border-top: 4px solid #333; border-bottom: 0; }
.caret.big { border-width: 4px 3px 0; border-top-color: #5a5a5a; }
.caret.dim { border-top-color: #8f8f8f; }

.titlebar { display: flex; align-items: center; height: 37px; padding: 18px 15px 0 2px; gap: 4px; background: #f1f1f1; }
.logo { width: 12px; height: 14px; }
.title { font: 9px/14px "Open Sans", sans-serif; color: #777; flex: 1; }
.window-buttons { display: flex; gap: 27px; }
.window-buttons svg { width: 10px; height: 10px; }

.tabbar { display: flex; height: 25px; padding-top: 3px; background: #c8c8c8; }
.quick { display: flex; align-items: center; width: 184px; padding: 0 3px 3px 6px; }
.quick button { gap: 4px; }
.quick .q-file { margin-left: 14px; }
.quick .q-save { margin-left: 13px; }
.quick .q-undo { margin-left: 14px; }
.quick .q-redo { margin-left: 9px; }
.quick .home { align-self: flex-start; width: 30px; height: 22px; margin-left: auto; background: #b7b7b7; }
.doc-tab { display: flex; flex: 1; align-items: center; padding: 0 6px 0 4px; border-radius: 4px 4px 0 0; background: #f2f2f2; }
.doc-name { display: flex; flex: 1; align-items: center; justify-content: center; gap: 3px; }
.account { display: flex; align-items: center; gap: 12px; padding: 0 10px 2px 3px; }
.plus { width: 22px; height: 22px; margin: 2px -4px 0 0; background: #b9b9b9; }
.account button:last-child { margin-left: 2px; }

.ribbon { display: flex; height: 64px; padding: 0 9px; border-bottom: 1px solid #d9d9d9; background: #f2f2f2; }
.design { gap: 4px; width: 86px; height: 48px; margin-top: 8px; border: 1px solid #ccc; border-radius: 3px; font-weight: bold; }
.ribbon-main { flex: 1; padding-left: 2px; }
.ribbon-tabs { display: flex; gap: 18px; padding-left: 12px; }
.ribbon-tabs button { height: 17px; padding: 1px 8px 0; border-bottom: 2px solid transparent; }
.ribbon-tabs .active { color: #2490bd; border-color: #2486a8; }
.groups { display: flex; }
.group { display: flex; flex-direction: column; align-items: center; gap: 2px; padding-top: 3px; height: 44px; border-left: 1px solid #d5d5d5; }
.group:first-child { border: 0; }
.tools { display: flex; gap: 8px; }
.tools svg { width: 26px; height: 26px; }
.label { gap: 3px; height: 16px; }
.g-make { width: 55px; }
.g-nest { width: 49px; }
.g-addins { width: 66px; }
.g-utility { width: 76px; }
.g-inspect { width: 210px; }
.g-select { width: 63px; }

.stage { position: relative; flex: 1; min-height: 480px; background: #fefefe; }
.scene { position: absolute; width: 100%; height: 100%; }
.dimension { font: 13px "Liberation Sans", Arial, sans-serif; fill: #262626; }
.axis-z { font-size: 10px; fill: #3b38c1; }
.axis-x { font-size: 8px; fill: #dc7880; }
.axis-y { font-size: 8px; fill: #8ad493; }
.face { font-size: 6px; fill: #777; }

.browser { position: absolute; top: 5px; left: 3px; width: 234px; }
.panel-head { display: flex; align-items: center; height: 20px; padding: 0 7px 0 3px; border: 1px solid #ddd; border-bottom-color: #aaa; background: #f1f1f1; color: #666; }
.panel-head span { flex: 1; padding-left: 7px; }
.tree { display: grid; gap: 4px; margin: 3px 0 0; padding: 0; list-style: none; }
.tree li { display: flex; align-items: center; gap: 6px; padding-left: 27px; height: 15px; }
.tree .root { padding-left: 13px; gap: 9px; }
.closed { width: 8px; height: 10px; }
.eye { width: 13px; height: 10px; }
.folder { width: 14px; height: 12px; }
.row { display: flex; align-items: center; gap: 6px; height: 15px; padding: 0 6px 0 4px; background: #f3f3f3; }
.row strong { display: flex; align-items: center; gap: 9px; height: 13px; padding: 0 7px 0 2px; background: #8b8b8b; color: #fff; }
.root .row { gap: 4px; padding: 0 4px 0 3px; }
.purple { border-left: 3px solid #cd85dc; }
.tree .yellow { gap: 6px; margin-left: -1px; padding-left: 5px; border-left: 4px solid #f5cf75; }
.tree .settings { padding-left: 3px; gap: 10px; }
.tree .views { gap: 10px; padding-left: 3px; }
.item { display: flex; align-items: center; gap: 10px; }
.item.hatched { position: relative; }
.hatched::after { content: ""; position: absolute; right: -6px; bottom: -1px; left: -3px; height: 3px; background: repeating-linear-gradient(120deg, #7389a8 0 2px, transparent 2px 5px); }
.item.spur { gap: 9px; }

.offset { position: absolute; top: 80px; right: 3px; width: 194px; border: 1px solid #d8d8d8; border-bottom-color: #bbb; background: #f2f2f2; }
.offset-head { display: flex; align-items: center; gap: 2px; height: 18px; padding: 0 3px 0 6px; border-bottom: 1px solid #d3d3d3; color: #666; }
.offset-head span { flex: 1; }
.fields { display: grid; grid-template-columns: 44px 115px; grid-auto-rows: 20px; align-items: center; gap: 3px 0; padding: 2px 9px 4px 8px; }
.plane { display: flex; align-items: center; gap: 8px; }
.plane #plane { gap: 4px; width: 61px; height: 20px; background: #0f9ccc; color: #fff; }
.select { display: flex; align-items: center; height: 20px; padding: 0 3px 0 2px; border: 1px solid #ddd; background: #fff; }
.select select { flex: 1; min-width: 0; padding: 0 0 0 2px; border: 0; background: none; appearance: none; }
.fields input { width: 100%; height: 19px; padding: 0 2px; border: 1px solid #ddd; background: #fff; }
.offset-foot { display: flex; align-items: center; gap: 8px; height: 28px; padding: 0 8px 0 5px; border-top: 1px solid #d5d5d5; }
.offset-foot svg { margin-right: auto; }
.offset-foot button { width: 47px; height: 16px; border: 1px solid #ccc; background: #eee; color: #666; }

.float-input { position: absolute; top: 391px; left: 34%; display: flex; align-items: center; height: 18px; border: 1px solid #e1e1e1; background: #f4f4f4; }
.grip { width: 4px; height: 14px; margin: 0 2px; border-right: 1px solid #ccc; }
.float-input input { width: 55px; height: 16px; padding: 0 18px 0 0; border: 1px solid #ccc; background: #fff; text-align: right; }
.text-cursor { width: 1px; height: 11px; margin: 0 17px 0 -18px; background: #222; }
.float-input button { width: 19px; }

.comments { position: absolute; bottom: 4px; left: 3px; width: 234px; padding-left: 11px; }
.navbar { position: absolute; bottom: 6px; left: 50%; transform: translateX(-50%); display: flex; align-items: center; gap: 6px; height: 17px; padding: 0 2px; background: #f4f4f4; }
.navbar button { gap: 2px; }
.navbar svg { width: 13px; height: 13px; }
.status { position: absolute; right: 9px; bottom: 6px; display: flex; align-items: center; gap: 10px; font-weight: bold; color: #222; }

.timeline { display: flex; align-items: flex-start; height: 57px; padding: 5px 10px 0 7px; border-top: 1px solid #e3e3e3; background: #f1f1f1; }
.playback { display: flex; gap: 7px; padding-top: 6px; }
.playback svg { width: 12px; height: 12px; }
.history { display: grid; grid-template-columns: repeat(20, 1fr); grid-template-rows: 4px 17px 9px; width: 374px; margin-left: 16px; }
.history button { height: 17px; }
.history button svg { width: 15px; height: 15px; }
.bar { margin: 0 2px 0 1px; }
.p { background: #cd82d2; }
.y { background: #f4d28e; }
.s7 { grid-column: span 7; }
.s3 { grid-column: span 3; }
.s2 { grid-column: span 2; }
.lit { background: #dfef27; }
.rail { grid-column: 1 / -1; width: 100%; height: 9px; }
.playhead { margin-left: -4px; }
.settings-button { margin: 6px 0 0 auto; }
```
